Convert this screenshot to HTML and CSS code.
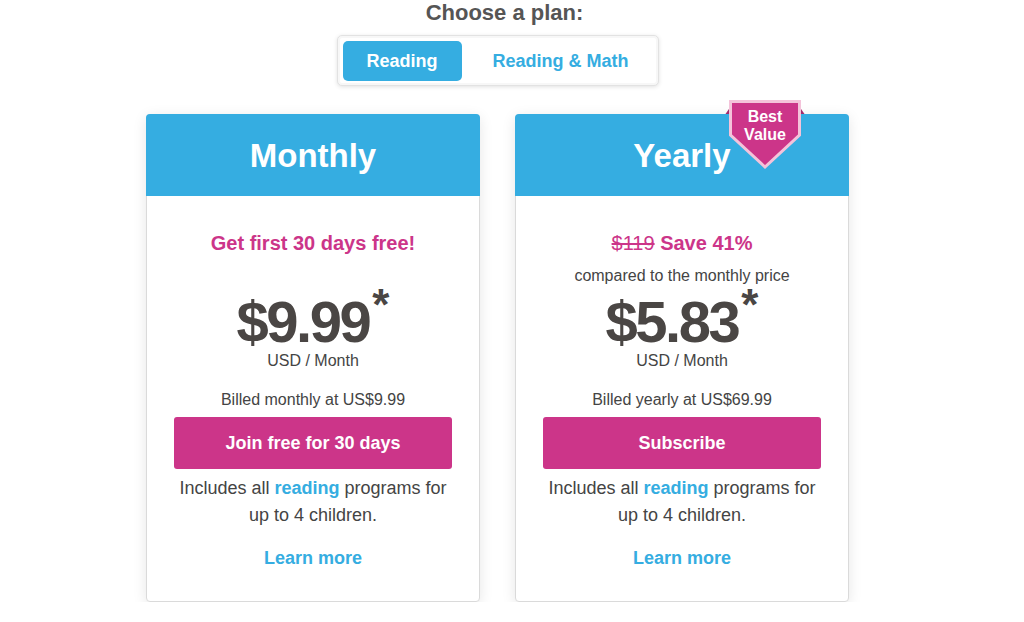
FILE: index.html
```html
<!DOCTYPE html>
<html>
<head>
<meta charset="utf-8">
<link rel="stylesheet" href="styles.css">
</head>
<body>
<div class="page">
  <h1 class="title">Choose a plan:</h1>
  <div class="toggle">
    <button class="tab active">Reading</button>
    <button class="tab">Reading &amp; Math</button>
  </div>
  <div class="cards">
    <div class="card">
      <div class="card-head">Monthly</div>
      <div class="card-body">
        <div class="promo">
          <div class="promo-main">Get first 30 days free!</div>
        </div>
        <div class="price"><span class="amount">$9.99</span><span class="star">*</span></div>
        <div class="unit">USD / Month</div>
        <div class="billed">Billed monthly at US$9.99</div>
        <button class="cta">Join free for 30 days</button>
        <p class="includes">Includes all <span class="hl">reading</span> programs for up to 4 children.</p>
        <a class="learn">Learn more</a>
      </div>
    </div>
    <div class="card">
      <div class="card-head">Yearly</div>
      <div class="badge">
        <svg class="badge-shape" width="80" height="72" viewBox="0 0 80 72">
          <polygon points="0.5,16 5,9.5 5,16" fill="#a42a6c"/>
          <polygon points="79.5,16 75,9.5 75,16" fill="#a42a6c"/>
          <polygon points="5.5,3.5 74.5,3.5 74.5,37 40,69 5.5,37" fill="#cc3589" stroke="#f4c3da" stroke-width="3" stroke-linejoin="miter"/>
        </svg>
        <div class="badge-text">Best<br>Value</div>
      </div>
      <div class="card-body">
        <div class="promo">
          <div class="promo-main"><span class="old">$119</span> Save 41%</div>
          <div class="promo-sub">compared to the monthly price</div>
        </div>
        <div class="price"><span class="amount">$5.83</span><span class="star">*</span></div>
        <div class="unit">USD / Month</div>
        <div class="billed">Billed yearly at US$69.99</div>
        <button class="cta">Subscribe</button>
        <p class="includes">Includes all <span class="hl">reading</span> programs for up to 4 children.</p>
        <a class="learn">Learn more</a>
      </div>
    </div>
  </div>
</div>
</body>
</html>
```

FILE: styles.css
```css
* { box-sizing: border-box; }
html, body { margin: 0; padding: 0; background: #fff; }
body {
  font-family: "Liberation Sans", Arial, Helvetica, sans-serif;
  color: #4a4a4a;
}
.page {
  width: 995px;
  display: flex;
  flex-direction: column;
  align-items: center;
}
.title {
  margin: 1px 0 0 14px;
  font-size: 22px;
  line-height: 24px;
  font-weight: bold;
  color: #555;
}
.toggle {
  margin-top: 10px;
  width: 322px;
  height: 51px;
  padding: 5px 4px 4px 5px;
  border: 1px solid #e2e2e2;
  border-radius: 5px;
  box-shadow: 0 1px 4px rgba(0,0,0,0.12), inset 0 0 0 2px #f7f7f7;
  display: flex;
  background: #fff;
}
.tab {
  font-family: inherit;
  font-size: 18px;
  font-weight: bold;
  border: 0;
  background: transparent;
  color: #35ade1;
  height: 40px;
  border-radius: 5px;
  padding: 0;
  flex: 1;
  padding-left: 6px;
}
.tab.active {
  flex: 0 0 119px;
  background: #35ade1;
  color: #fff;
  padding-left: 0;
}
.cards {
  margin-top: 28px;
  display: flex;
  gap: 35px;
}
.card {
  position: relative;
  width: 334px;
  height: 488px;
  border: 1px solid #dadada;
  border-radius: 4px;
  box-shadow: 0 3px 14px rgba(0,0,0,0.10);
  background: #fff;
  display: flex;
  flex-direction: column;
}
.card-head {
  height: 82px;
  margin: -1px -1px 0;
  background: #35ade1;
  border-radius: 4px 4px 0 0;
  color: #fff;
  font-size: 33px;
  font-weight: bold;
  display: flex;
  align-items: center;
  justify-content: center;
  padding-top: 2px;
}
.card-body {
  padding: 33px 27px 0;
  display: flex;
  flex-direction: column;
  align-items: center;
  text-align: center;
}
.promo {
  height: 64px;
  display: flex;
  flex-direction: column;
  align-items: center;
}
.promo-main {
  font-size: 20px;
  line-height: 28px;
  font-weight: bold;
  color: #cc3589;
}
.old {
  font-weight: normal;
  text-decoration: line-through;
}
.promo-sub {
  margin-top: 9px;
  font-size: 16px;
  line-height: 20px;
  color: #444;
}
.price {
  height: 58px;
  display: flex;
  justify-content: center;
  align-items: flex-start;
  color: #4a4644;
  font-weight: bold;
}
.amount {
  font-size: 58px;
  line-height: 58px;
  letter-spacing: -2.5px;
}
.star {
  font-size: 44px;
  line-height: 44px;
  margin-top: -10px;
  margin-left: 3px;
}
.unit {
  font-size: 16px;
  line-height: 20px;
  color: #444;
}
.billed {
  margin-top: 19px;
  font-size: 16px;
  line-height: 20px;
  color: #444;
}
.cta {
  margin-top: 7px;
  width: 278px;
  height: 52px;
  border: 0;
  border-radius: 3px;
  background: #cc3589;
  color: #fff;
  font-family: inherit;
  font-size: 18px;
  font-weight: bold;
}
.includes {
  margin: 6px 0 0;
  font-size: 18px;
  line-height: 27px;
  color: #444;
  width: 280px;
}
.hl { color: #35ade1; font-weight: bold; }
.learn {
  margin-top: 16px;
  font-size: 18px;
  line-height: 27px;
  font-weight: bold;
  color: #35ade1;
}
.badge {
  position: absolute;
  left: 209px;
  top: -17px;
  width: 80px;
  height: 72px;
}
.badge-shape { position: absolute; left: 0; top: 0; }
.badge-text {
  position: absolute;
  left: 0;
  top: 10px;
  width: 80px;
  text-align: center;
  color: #fff;
  font-weight: bold;
  font-size: 16px;
  line-height: 18px;
}
```
